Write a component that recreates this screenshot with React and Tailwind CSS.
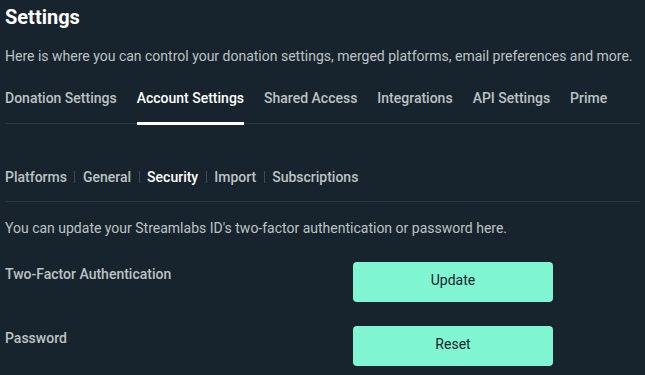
export default function App() {
  const tabs = ["Donation Settings", "Account Settings", "Shared Access", "Integrations", "API Settings", "Prime"];
  const subs = ["Platforms", "General", "Security", "Import", "Subscriptions"];
  return (
    <div className="w-[645px] h-[375px] overflow-hidden bg-[#17242d] px-[5px] pt-[5px] font-['Roboto',sans-serif] text-[#bdc2c4]">
      <h1 className="text-[20px] leading-[24px] font-bold text-white">Settings</h1>
      <p className="mt-[17px] text-[14px] leading-[20px]">
        Here is where you can control your donation settings, merged platforms, email preferences and more.
      </p>
      <div className="mt-[22px] flex gap-5 border-b border-[#2b383f]">
        {tabs.map((t) => (
          <div
            key={t}
            className={
              t === "Account Settings"
                ? "-mb-[2px] pb-[12px] text-[14px] leading-[20px] font-medium text-white border-b-[3px] border-white"
                : "pb-[15px] text-[14px] leading-[20px] font-medium"
            }
          >
            {t}
          </div>
        ))}
      </div>
      <div className="mt-[43px] flex items-center pb-[14px] border-b border-[#2b383f]">
        {subs.map((s, i) => (
          <div key={s} className="flex items-center">
            {i > 0 && <span className="mx-[7.5px] h-[12px] w-px bg-[#3c4a52]" />}
            <span
              className={
                s === "Security"
                  ? "text-[14px] leading-[20px] font-medium text-white"
                  : "text-[14px] leading-[20px] font-medium"
              }
            >
              {s}
            </span>
          </div>
        ))}
      </div>
      <p className="mt-[16px] text-[14px] leading-[20px]">
        You can update your Streamlabs ID's two-factor authentication or password here.
      </p>
      <div className="mt-[24px] flex flex-col gap-6">
        {[
          ["Two-Factor Authentication", "Update"],
          ["Password", "Reset"],
        ].map(([label, btn]) => (
          <div key={label} className="flex">
            <div className="w-[348px] pt-[2px] text-[14px] leading-[20px] font-medium">{label}</div>
            <button className="flex h-[40px] w-[200px] items-center justify-center rounded-[4px] bg-[#80f5d2] pb-[4px] text-[14px] leading-[20px] font-normal text-[#17242d]">
              {btn}
            </button>
          </div>
        ))}
      </div>
    </div>
  );
}
